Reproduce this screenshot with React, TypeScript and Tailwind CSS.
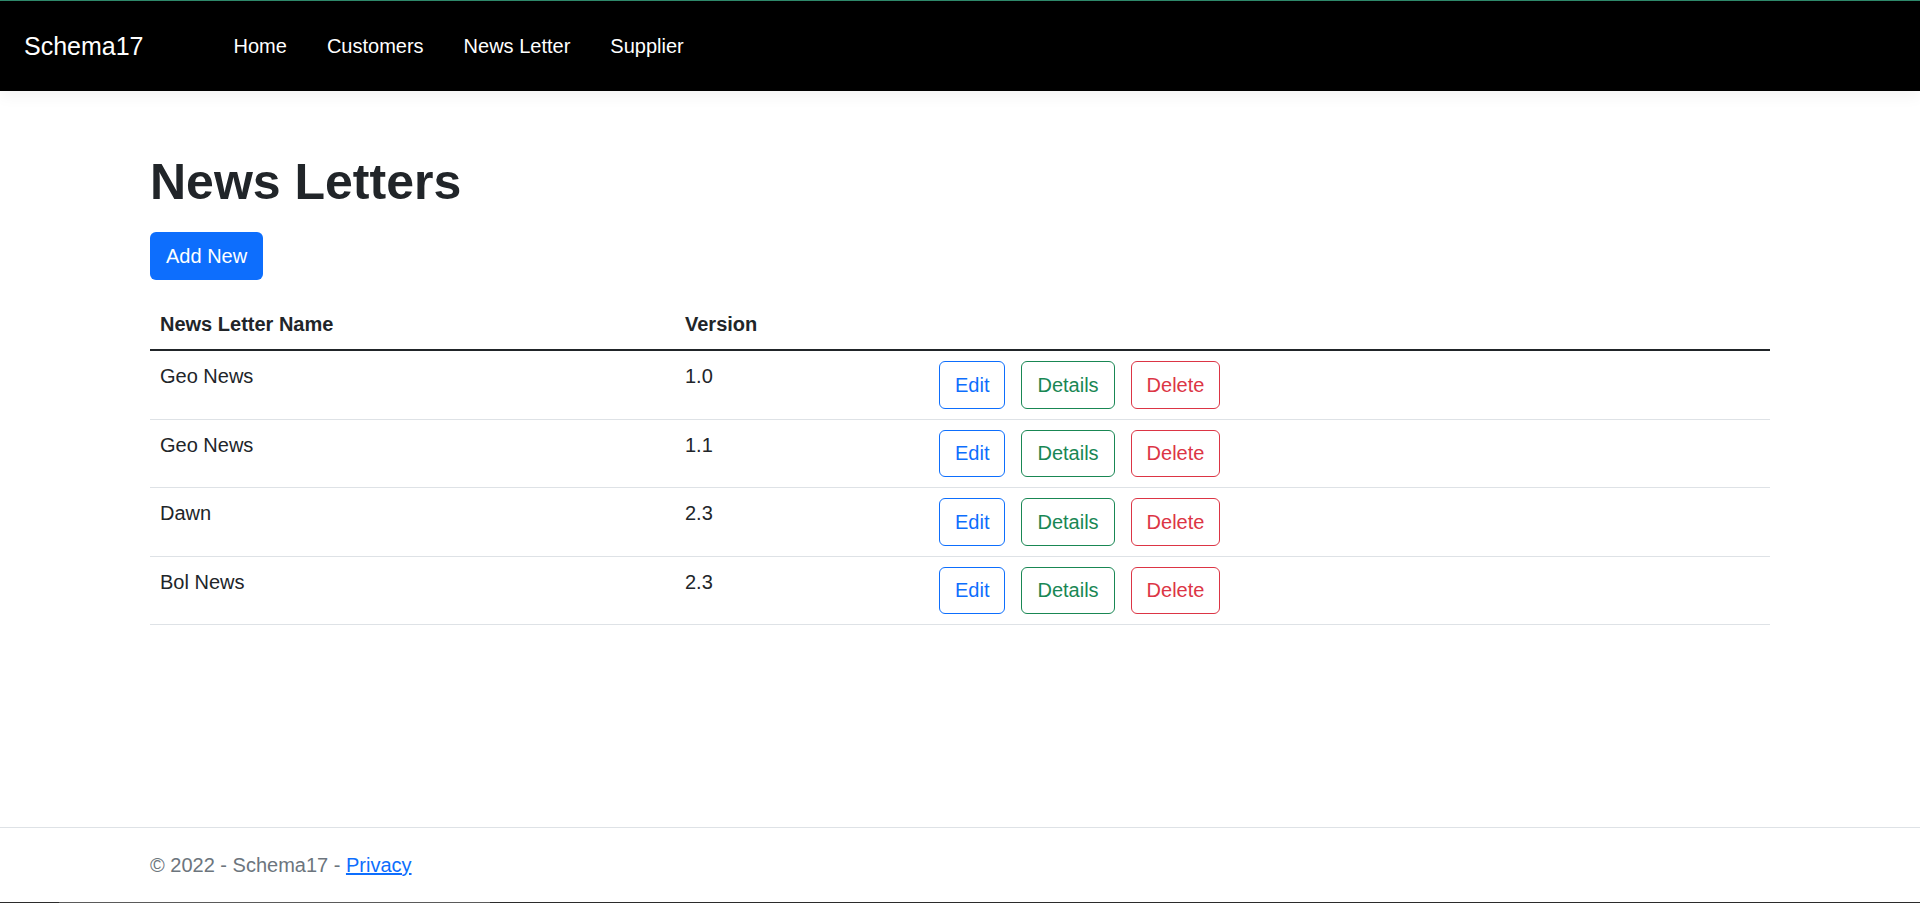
const letters = [
  { name: "Geo News", version: "1.0" },
  { name: "Geo News", version: "1.1" },
  { name: "Dawn", version: "2.3" },
  { name: "Bol News", version: "2.3" },
];

const navLinks = ["Home", "Customers", "News Letter", "Supplier"];

function ActionButtons() {
  return (
    <div className="flex gap-4">
      <button className="h-[47.5px] px-[15px] border border-[#0d6efd] text-[#0d6efd] rounded-[6px] text-[20px] leading-[30px]">
        Edit
      </button>
      <button className="h-[47.5px] px-[15px] border border-[#198754] text-[#198754] rounded-[6px] text-[20px] leading-[30px]">
        Details
      </button>
      <button className="h-[47.5px] px-[15px] border border-[#dc3545] text-[#dc3545] rounded-[6px] text-[20px] leading-[30px]">
        Delete
      </button>
    </div>
  );
}

export default function App() {
  return (
    <div className="min-h-[903px] flex flex-col bg-white font-['Liberation_Sans',Arial,sans-serif] text-[#212529]">
      <header className="border-t border-[#2f8a6c] relative z-10">
        <nav className="h-[90px] bg-black flex items-center pl-6 shadow-[0_5px_15px_rgba(0,0,0,0.05)]">
          <a href="#" className="text-white text-[25px] leading-[36px]">
            Schema17
          </a>
          <ul className="flex gap-10 ml-[90px]">
            {navLinks.map((link) => (
              <li key={link}>
                <a href="#" className="text-white text-[20px] leading-[30px]">
                  {link}
                </a>
              </li>
            ))}
          </ul>
        </nav>
      </header>

      <main className="flex-1 w-[1620px] mx-auto pt-[61px]">
        <h1 className="text-[50px] leading-[60px] font-bold">News Letters</h1>
        <button className="mt-[20px] h-[48px] px-[16px] bg-[#0d6efd] text-white text-[20px] leading-[30px] rounded-[6px]">
          Add New
        </button>

        <table className="mt-[20px] w-full border-collapse text-[20px] leading-[30px]">
          <thead>
            <tr className="border-b-2 border-[#212529]">
              <th className="w-[525px] px-[10px] pt-[9px] pb-[10px] text-left font-bold">News Letter Name</th>
              <th className="w-[254px] px-[10px] pt-[9px] pb-[10px] text-left font-bold">Version</th>
              <th className="px-[10px] pt-[9px] pb-[10px]"></th>
            </tr>
          </thead>
          <tbody>
            {letters.map((item, i) => (
              <tr key={i} className="border-b border-[#dee2e6]">
                <td className="p-[10px] align-top">{item.name}</td>
                <td className="p-[10px] align-top">{item.version}</td>
                <td className="p-[10px] align-top">
                  <ActionButtons />
                </td>
              </tr>
            ))}
          </tbody>
        </table>
      </main>

      <footer className="border-t border-[#dee2e6]">
        <div className="w-[1620px] mx-auto h-[74px] flex items-center text-[20px] text-[#6c757d]">
          © 2022 - Schema17 -&nbsp;
          <a href="#" className="text-[#0d6efd] underline">
            Privacy
          </a>
        </div>
        <div className="flex h-px">
          <div className="w-[59px] bg-[#2b2b2b]"></div>
          <div className="w-[431px] bg-[#5a5a5a]"></div>
          <div className="flex-1 bg-[#2b2b2b]"></div>
        </div>
      </footer>
    </div>
  );
}
